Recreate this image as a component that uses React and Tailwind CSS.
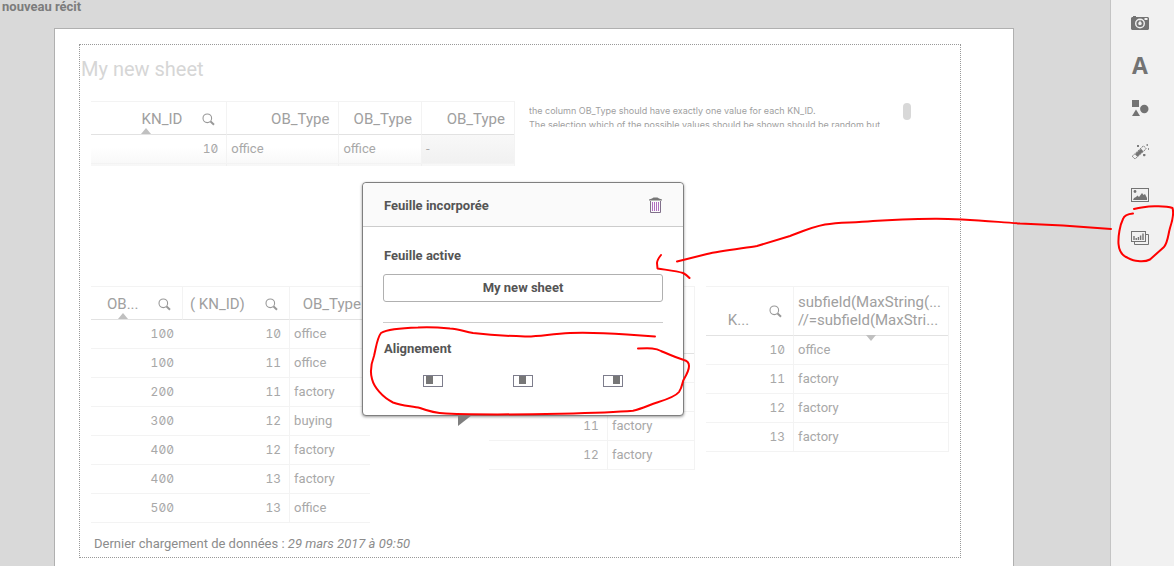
const office = "office";
const factory = "factory";

const objectRows = [
  ["100", "10", office],
  ["100", "11", office],
  ["200", "11", factory],
  ["300", "12", "buying"],
  ["400", "12", factory],
  ["400", "13", factory],
  ["500", "13", office],
];

const middleRows = [
  ["", ""],
  ["", ""],
  ["11", factory],
  ["12", factory],
];

const rightRows = [
  ["10", office],
  ["11", factory],
  ["12", factory],
  ["13", factory],
];

function SearchButton() {
  return (
    <button type="button" aria-label="Rechercher" className="block">
      <svg width="13" height="13" viewBox="0 0 13 13" fill="none" stroke="#999">
        <circle cx="5.3" cy="5.3" r="4.3" strokeWidth="1.1" />
        <path d="M8.6 8.6 L12 11.8" strokeWidth="2" />
      </svg>
    </button>
  );
}

function SortUp() {
  return (
    <svg width="10" height="6" viewBox="0 0 10 6">
      <path d="M5 0 L10 6 H0 Z" fill="#c0c0c0" />
    </svg>
  );
}

function SortDown() {
  return (
    <svg className="absolute top-full left-1/2 -translate-x-1/2" width="10" height="6" viewBox="0 0 10 6">
      <path d="M0 0 H10 L5 6 Z" fill="#c0c0c0" />
    </svg>
  );
}

function NumberCell({ children }) {
  return (
    <td className="h-[29px] border-b border-[#f3f3f3] p-0 pr-2 text-right font-['Inter',sans-serif] text-xs tabular-nums slashed-zero">
      {children}
    </td>
  );
}

function TextCell({ children, className = "" }) {
  return <td className={`h-[29px] border-b border-l border-[#f3f3f3] p-0 pl-1 ${className}`}>{children}</td>;
}

function TypeHeader() {
  return (
    <th className="border-b border-l border-[#e2e2e2] border-l-[#f3f3f3] p-0 pt-0.5 pr-[9px] text-right font-normal">
      OB_Type
    </th>
  );
}

function TopTable() {
  return (
    <table className="w-full table-fixed border-separate border-spacing-0 border-t border-r border-[#f3f3f3] text-[13px] text-[#a8a8a8]">
      <colgroup>
        <col className="w-[32%]" />
        <col className="w-[26.5%]" />
        <col className="w-[19.5%]" />
        <col className="w-[22%]" />
      </colgroup>
      <thead className="text-[15px] text-[#a0a0a0]">
        <tr>
          <th className="relative h-[33px] border-b border-[#e2e2e2] p-0 pt-0.5 font-normal">
            <div className="flex items-center justify-end gap-5 pr-[11px]">
              <span>KN_ID</span>
              <SearchButton />
            </div>
            <span className="absolute bottom-0 left-[37%]">
              <SortUp />
            </span>
          </th>
          <TypeHeader />
          <TypeHeader />
          <TypeHeader />
        </tr>
      </thead>
      <tbody className="bg-linear-to-b from-white from-40% to-[#f7f7f7]">
        <tr>
          <NumberCell>10</NumberCell>
          <TextCell>office</TextCell>
          <TextCell>office</TextCell>
          <TextCell className="bg-linear-to-b from-[#f8f8f8] to-[#f1f1f1]">-</TextCell>
        </tr>
        {/* top edge of the next, scrolled-off row */}
        <tr>
          <td className="h-0.5 p-0" />
          <td className="border-l border-[#f0f0f0] p-0" />
          <td className="border-l border-[#f0f0f0] p-0" />
          <td className="border-l border-[#f0f0f0] p-0" />
        </tr>
      </tbody>
    </table>
  );
}

function ObjectTable() {
  return (
    <table className="w-full table-fixed border-separate border-spacing-0 border-t border-[#f3f3f3] text-[13px] text-[#a8a8a8]">
      <colgroup>
        <col className="w-[32.6%]" />
        <col className="w-[38.4%]" />
        <col className="w-[29%]" />
      </colgroup>
      <thead className="text-[15px] text-[#a0a0a0]">
        <tr>
          <th className="relative h-[33px] border-b border-[#e2e2e2] p-0 pt-0.5 font-normal">
            <div className="flex items-center justify-between pr-[11px] pl-4">
              <span>OB...</span>
              <SearchButton />
            </div>
            <span className="absolute bottom-0 left-[27px]">
              <SortUp />
            </span>
          </th>
          <th className="border-b border-l border-[#e2e2e2] border-l-[#f3f3f3] p-0 pt-0.5 font-normal">
            <div className="flex items-center justify-between pr-[11px] pl-[7px]">
              <span>( KN_ID)</span>
              <SearchButton />
            </div>
          </th>
          <TypeHeader />
        </tr>
      </thead>
      <tbody>
        {objectRows.map(([ob, kn, type], i) => (
          <tr key={i}>
            <NumberCell>{ob}</NumberCell>
            <NumberCell>{kn}</NumberCell>
            <TextCell>{type}</TextCell>
          </tr>
        ))}
      </tbody>
    </table>
  );
}

function MiddleTable() {
  return (
    <table className="w-full table-fixed border-separate border-spacing-0 border-t border-r border-[#f3f3f3] text-[13px] text-[#a8a8a8]">
      <colgroup>
        <col className="w-[57.5%]" />
        <col className="w-[42.5%]" />
      </colgroup>
      <thead>
        <tr>
          <th className="h-[67px] border-b border-[#e2e2e2] p-0" />
          <th className="border-b border-[#e2e2e2] p-0" />
        </tr>
      </thead>
      <tbody>
        {middleRows.map(([kn, type], i) => (
          <tr key={i}>
            <NumberCell>{kn}</NumberCell>
            <TextCell>{type}</TextCell>
          </tr>
        ))}
      </tbody>
    </table>
  );
}

function RightTable() {
  return (
    <table className="w-full table-fixed border-separate border-spacing-0 border-t border-r border-[#f3f3f3] text-[13px] text-[#a8a8a8]">
      <colgroup>
        <col className="w-[36%]" />
        <col className="w-[64%]" />
      </colgroup>
      <thead className="text-[15px] text-[#a0a0a0]">
        <tr>
          <th className="h-[49px] border-b border-[#e2e2e2] p-0 align-bottom font-normal">
            <div className="flex items-start justify-end gap-5 pr-[11px] pb-1">
              <span className="pt-2">K...</span>
              <span className="pt-1">
                <SearchButton />
              </span>
            </div>
          </th>
          <th className="relative border-b border-l border-[#e2e2e2] border-l-[#f3f3f3] p-0 pl-1 text-left leading-[18px] font-normal whitespace-nowrap">
            subfield(MaxString(...
            <br />
            //=subfield(MaxStri...
            <SortDown />
          </th>
        </tr>
      </thead>
      <tbody>
        {rightRows.map(([kn, type], i) => (
          <tr key={i}>
            <NumberCell>{kn}</NumberCell>
            <TextCell>{type}</TextCell>
          </tr>
        ))}
      </tbody>
    </table>
  );
}

function AlignIcon({ x }) {
  return (
    <svg width="20" height="12" viewBox="0 0 20 12" shapeRendering="crispEdges">
      <rect x="0.5" y="0.5" width="19" height="11" fill="#fff" stroke="#7d7d8c" />
      <rect x={x} y="1" width="7" height="8" fill="#777" />
    </svg>
  );
}

function TrashIcon() {
  return (
    <svg width="13" height="17" viewBox="0 0 13 17" fill="none">
      <path d="M0 3.5 V2.5 L3 1.5 L4.5 0.5 H8.5 L10 1.5 L13 2.5 V3.5 Z" fill="#777" />
      <path d="M1.5 4 V15.5 H11.5 V4" stroke="#80708a" />
      <path d="M3.5 5 V14 M5.5 5 V14 M7.5 5 V14 M9.5 5 V14" stroke="#b06cc0" />
    </svg>
  );
}

function SheetDialog() {
  return (
    <div
      role="dialog"
      aria-labelledby="dialog-title"
      className="absolute top-[153px] left-[307px] w-[322px] rounded border border-[#7f7f7f] bg-white text-[13px] font-bold text-[#555] shadow-[0_1px_3px_rgba(0,0,0,0.4)]"
    >
      <div className="flex h-11 items-center justify-between rounded-t border-b border-[#ccc] bg-[#fafafa] pt-0.5 pr-[21px] pl-[21px]">
        <h2 id="dialog-title">Feuille incorporée</h2>
        <button type="button" aria-label="Supprimer">
          <TrashIcon />
        </button>
      </div>
      <div className="px-5 pt-[19px] pb-7">
        <h3 className="pl-px leading-5">Feuille active</h3>
        <button type="button" className="mt-2 block h-7 w-full rounded-[3px] border border-[#b0b0b0] bg-white">
          My new sheet
        </button>
        <hr className="mt-5 border-[#ccc]" />
        <h3 className="mt-4 pl-px leading-5">Alignement</h3>
        <div className="mt-4 grid grid-cols-3 px-[5px]">
          <button type="button" aria-label="Gauche" className="flex justify-center">
            <AlignIcon x={3} />
          </button>
          <button type="button" aria-label="Centre" className="flex justify-center">
            <AlignIcon x={6} />
          </button>
          <button type="button" aria-label="Droite" className="flex justify-center">
            <AlignIcon x={10} />
          </button>
        </div>
      </div>
      <svg className="absolute top-full left-[95px]" width="14" height="12" viewBox="0 0 14 12">
        <path d="M0 0 H14 L0 11 Z" fill="#7f7f7f" />
      </svg>
    </div>
  );
}

function ToolButton({ label, children }) {
  return (
    <button type="button" aria-label={label} className="flex h-[43px] w-full items-center justify-center pt-0.5 text-[#737373]">
      {children}
    </button>
  );
}

function Toolbar() {
  return (
    <aside className="w-16 shrink-0 border-l border-[#c4c4c4] bg-[#f1f1f1] pr-[5px]">
      <ToolButton label="Instantanés">
        <svg width="18" height="14" viewBox="0 0 18 14">
          <path
            fill="currentColor"
            fillRule="evenodd"
            d="M1 1 H2 V0 H5 V1 H17 L18 2 V13 L17 14 H1 L0 13 V2 Z M9 2.5 A5 5 0 1 0 9 12.5 A5 5 0 1 0 9 2.5 Z M13.500 2 V4 H16.5 V2 Z"
          />
          <circle cx="9" cy="7.5" r="2.7" fill="none" stroke="currentColor" strokeWidth="1.8" />
          <path d="M9 7.5 V4.500" stroke="#f1f1f1" strokeWidth="1" />
        </svg>
      </ToolButton>
      <ToolButton label="Texte">
        <span className="font-['Open_Sans',sans-serif] text-[23px] leading-none font-bold">A</span>
      </ToolButton>
      <ToolButton label="Formes">
        <svg width="18" height="17" viewBox="0 0 18 17" fill="currentColor">
          <rect x="1" y="0" width="7" height="7" />
          <circle cx="13.3" cy="9" r="4.2" />
          <path d="M5 9.5 L9 16 H1 Z" />
        </svg>
      </ToolButton>
      <ToolButton label="Effets">
        <svg width="18" height="16" viewBox="0 0 18 16" fill="none" stroke="currentColor">
          <path d="M1.200 12.300 L12.500 1.800 L15.200 4.800 L4 15 Z" strokeWidth="0.9" strokeDasharray="2 0.6" />
          <path d="M4 10.300 L10 4.700 L12.300 7.200 L6.300 12.700 Z" fill="currentColor" stroke="none" />
          <path d="M6 2 H8 M7 1 V3 M12 11 H14.500 M13.200 10 V12.200 M15.500 1 H17 M17 5 H18" strokeWidth="1.3" />
        </svg>
      </ToolButton>
      <ToolButton label="Médias">
        <svg width="18" height="14" viewBox="0 0 18 14" fill="none">
          <rect x="0.5" y="0.5" width="17" height="13" stroke="currentColor" />
          <circle cx="4" cy="3.5" r="1.4" fill="currentColor" />
          <path d="M2 12 L3 10 L5 9 L6.500 7.5 L8 9 L11 5 L12.5 7 L14 6 L16 10 V12 Z" fill="currentColor" />
        </svg>
      </ToolButton>
      <ToolButton label="Feuilles">
        <svg width="18" height="14" viewBox="0 0 18 14" fill="none" stroke="currentColor">
          <path d="M3.5 11 V13.5 H17.5 V3.5 H15" />
          <rect x="0.5" y="0.5" width="14" height="10" />
          <path d="M3 5 V9 M5.200 7 V9 M7.400 6 V9 M9.600 4.500 V9 M12 2.500 V9" strokeWidth="1.4" />
        </svg>
      </ToolButton>
    </aside>
  );
}

// Freehand red marks drawn on top of the page
function Annotations() {
  return (
    <svg
      className="pointer-events-none absolute top-0 left-0"
      width="1174"
      height="566"
      viewBox="0 0 1174 566"
      fill="none"
      stroke="#f00"
      strokeWidth="2"
      strokeLinecap="round"
      strokeLinejoin="round"
    >
      <path d="M1111 229 L1063 225.500 L1020 223.500 C985 221 960 218.500 935 218.700 C910 219 895 219.500 873 221 C850 223 840 222 825 224.500 C812 227 803 231 790 236 L757 246 C745 248 720 251 707 254 L677 261.500" />
      <path d="M661 255 Q657 260 657 263 L657.500 268.500 C667 270 677 271 683 273 Q687 275 689.500 278" />
      <path d="M655 336.500 L627 334.500 C605 333 585 332.500 570 333 C550 334 538 337 525 336.500 C505 336 490 335 473 333 C463 331 458 329 450 328.500 C435 327 425 327 418 327.500 C400 328 386 330 381 333 C377 338 376 348 374 356 C371 364 370 372 372 379 C374 387 382 397 393 402.500 C402 406 412 406 420 408 C428 411 435 413 446 413.500 C480 415 520 414.500 560 413.700 C590 413 612 412.500 633 410.700 C642 409 649 405 657 402.500 C665 400 675 397 679 392 C683 386 682 382 684 379 C687 374 689 370 689 366 C689 363 688 361 684 360 C677 358 668 354 661 351 C656 348 650 348 638 348.500" />
      <path d="M1133 213.500 C1128 214 1124 216 1123 219 C1120 225 1118 236 1118.500 244 C1119 250 1122 255 1126 257 C1130 259 1133 261 1138 261 C1142 261.500 1147 261 1150 259.500 L1164 247 C1168 242 1168 235 1170 228 C1172 222 1174 213 1172.500 208 C1165 205 1145 206 1134 209" />
    </svg>
  );
}

export default function App() {
  return (
    <div className="relative flex min-h-screen overflow-hidden bg-[#d9d9d9] font-['Roboto',sans-serif]">
      <main className="flex min-w-0 flex-1 flex-col">
        <h1 className="h-7 pl-0.5 text-[13px] leading-[14px] font-bold text-[#7c7c7c]">nouveau récit</h1>
        <div className="relative mr-24 ml-[54px] flex-1 border border-b-0 border-[#b0b0b0] bg-white pt-[15px] pr-[52px] pb-2 pl-6">
          <section className="border border-dotted border-[#999]">
            <h2 className="pt-2 pl-px text-xl leading-8 text-[#d6d6d6]">My new sheet</h2>
            <div className="mt-4 grid h-[185px] grid-cols-[424fr_434fr] items-start px-[11px]">
              <TopTable />
              <div className="flex items-start justify-between pr-[38px] pl-3.5">
                <p className="h-[26px] overflow-hidden pt-[3px] font-['Inter',sans-serif] text-[9px] leading-[14px] whitespace-nowrap text-[#a0a0a0]">
                  the column OB_Type should have exactly one value for each KN_ID.
                  <br />
                  The selection which of the possible values should be shown should be random but
                </p>
                <div className="mt-0.5 h-[17px] w-2 shrink-0 rounded-full bg-[#d8d8d8]" />
              </div>
            </div>
            <div className="grid grid-cols-[398fr_217fr_243fr] items-start px-[11px]">
              <div className="pr-[119px]">
                <ObjectTable />
              </div>
              <div className="pr-[11px]">
                <MiddleTable />
              </div>
              <RightTable />
            </div>
            <p className="pt-[11px] pb-[3px] pl-3.5 text-[13px] leading-5 text-[#8c8c8c]">
              Dernier chargement de données : <em>29 mars 2017 à 09:50</em>
            </p>
          </section>
          <SheetDialog />
        </div>
      </main>
      <Toolbar />
      <Annotations />
    </div>
  );
}
